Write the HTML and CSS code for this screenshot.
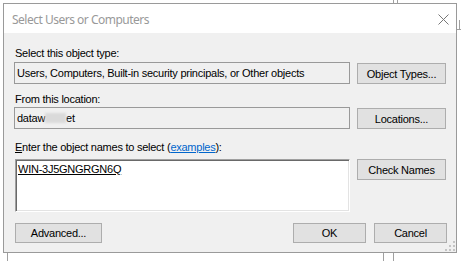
FILE: index.html
```html
<!DOCTYPE html>
<html lang="en">
<head>
  <meta charset="UTF-8">
  <title>Select Users or Computers</title>
  <link rel="stylesheet" href="styles.css">
</head>
<body>
  <div class="desk">
    <span class="bg-line v" style="left:393px;top:0;height:3px"></span>
    <span class="bg-line v" style="left:397px;top:0;height:3px"></span>
    <span class="bg-line h" style="left:457px;top:29px;width:4px"></span>
    <span class="bg-line v" style="left:459px;top:20px;height:9px"></span>
    <span class="bg-line v" style="left:7px;top:253px;height:8px"></span>
    <span class="bg-line v" style="left:383px;top:253px;height:8px"></span>
    <span class="bg-line v" style="left:393px;top:253px;height:8px"></span>

    <div class="dialog">
      <div class="titlebar">
        <span class="title">Select Users or Computers</span>
        <svg class="close" width="11" height="11" viewBox="0 0 11 11">
          <path d="M0.5 0.5 L10.5 10.5 M10.5 0.5 L0.5 10.5" stroke="#777" stroke-width="1" fill="none"/>
        </svg>
      </div>

      <div class="content">
        <div class="label first">Select this object type:</div>
        <div class="row">
          <div class="field">Users, Computers, Built-in security principals, or Other objects</div>
          <button class="btn">Object Types...</button>
        </div>

        <div class="label second">From this location:</div>
        <div class="row">
          <div class="field">dataw<span class="blur"></span>et</div>
          <button class="btn">Locations...</button>
        </div>

        <div class="label third"><u>E</u>nter the object names to select (<a href="#" class="link">examples</a>):</div>
        <div class="row names-row">
          <div class="names"><u>WIN-3J5GNGRGN6Q</u></div>
          <button class="btn">Check Names</button>
        </div>

        <div class="actions">
          <button class="btn advanced">Advanced...</button>
          <span class="spacer"></span>
          <button class="btn small">OK</button>
          <button class="btn small">Cancel</button>
        </div>
      </div>

      <svg class="grip" width="10" height="10" viewBox="0 0 10 10">
        <rect x="8" y="0" width="2" height="2" fill="#c4c4c4"/>
        <rect x="4" y="4" width="2" height="2" fill="#c4c4c4"/>
        <rect x="8" y="4" width="2" height="2" fill="#c4c4c4"/>
        <rect x="0" y="8" width="2" height="2" fill="#c4c4c4"/>
        <rect x="4" y="8" width="2" height="2" fill="#c4c4c4"/>
        <rect x="8" y="8" width="2" height="2" fill="#c4c4c4"/>
      </svg>
    </div>
  </div>
</body>
</html>
```

FILE: styles.css
```css
html, body {
  margin: 0;
  background: #fff;
}
.desk {
  position: relative;
  width: 461px;
  height: 261px;
  padding: 3px 0 0 3px;
  box-sizing: border-box;
  overflow: hidden;
}
.bg-line {
  position: absolute;
  background: #a0a0a0;
}
.bg-line.v {
  width: 1px;
}
.bg-line.h {
  height: 1px;
}
.dialog {
  position: relative;
  width: 454px;
  height: 250px;
  box-sizing: border-box;
  border: 1px solid #9a9a9a;
  background: #f0f0f0;
  display: flex;
  flex-direction: column;
}
.titlebar {
  height: 29px;
  background: #fff;
  display: flex;
  align-items: center;
  padding: 0 7px 0 8px;
}
.title {
  font-family: "Noto Sans", sans-serif;
  font-size: 12px;
  letter-spacing: -0.5px;
  color: #999;
  flex: 1;
  padding-top: 1px;
}
.close {
  display: block;
  margin-top: 1px;
}
.content {
  padding: 14px 9px 0 10px;
  font-family: "Liberation Sans", Arial, sans-serif;
  font-size: 11px;
  letter-spacing: -0.25px;
  color: #000;
}
.label {
  height: 13px;
  line-height: 13px;
  margin-left: 1px;
  margin-bottom: 2px;
}
.label.second {
  margin-top: 9px;
  margin-bottom: 1px;
}
.label.third {
  margin-top: 12px;
  margin-bottom: 5px;
}
.link {
  color: #0066cc;
}
.row {
  display: grid;
  grid-template-columns: 336px 89px;
  column-gap: 7px;
  align-items: start;
}
.field {
  height: 22px;
  box-sizing: border-box;
  border: 1px solid #999;
  background: #f0f0f0;
  padding: 0 2px;
  line-height: 20px;
  white-space: nowrap;
  overflow: hidden;
}
.blur {
  display: inline-block;
  width: 21px;
  height: 10px;
  vertical-align: -1px;
  background: #dadada;
  filter: blur(1px);
}
.btn {
  font-family: "Liberation Sans", Arial, sans-serif;
  font-size: 11px;
  letter-spacing: -0.25px;
  color: #000;
  background: #e1e1e1;
  border: 1px solid #adadad;
  height: 21px;
  margin: 1px 0 0;
  padding: 0;
  box-sizing: border-box;
}
.names-row .btn {
  margin-top: 0;
}
.names {
  height: 53px;
  box-sizing: border-box;
  margin-left: 1px;
  background: #fff;
  border: 1px solid;
  border-color: #a0a0a0 #fff #fff #a0a0a0;
  box-shadow: inset 1px 1px 0 #696969, inset -1px -1px 0 #e3e3e3;
  padding: 2px 2px 0 2px;
  line-height: 14px;
}
.actions {
  display: flex;
  gap: 8px;
  margin-top: 11px;
}
.actions .btn {
  margin: 0;
  height: 20px;
}
.advanced {
  width: 87px;
  margin-left: 1px !important;
}
.small {
  width: 73px;
}
.spacer {
  flex: 1;
}
.grip {
  position: absolute;
  right: 1px;
  bottom: 1px;
}
```
